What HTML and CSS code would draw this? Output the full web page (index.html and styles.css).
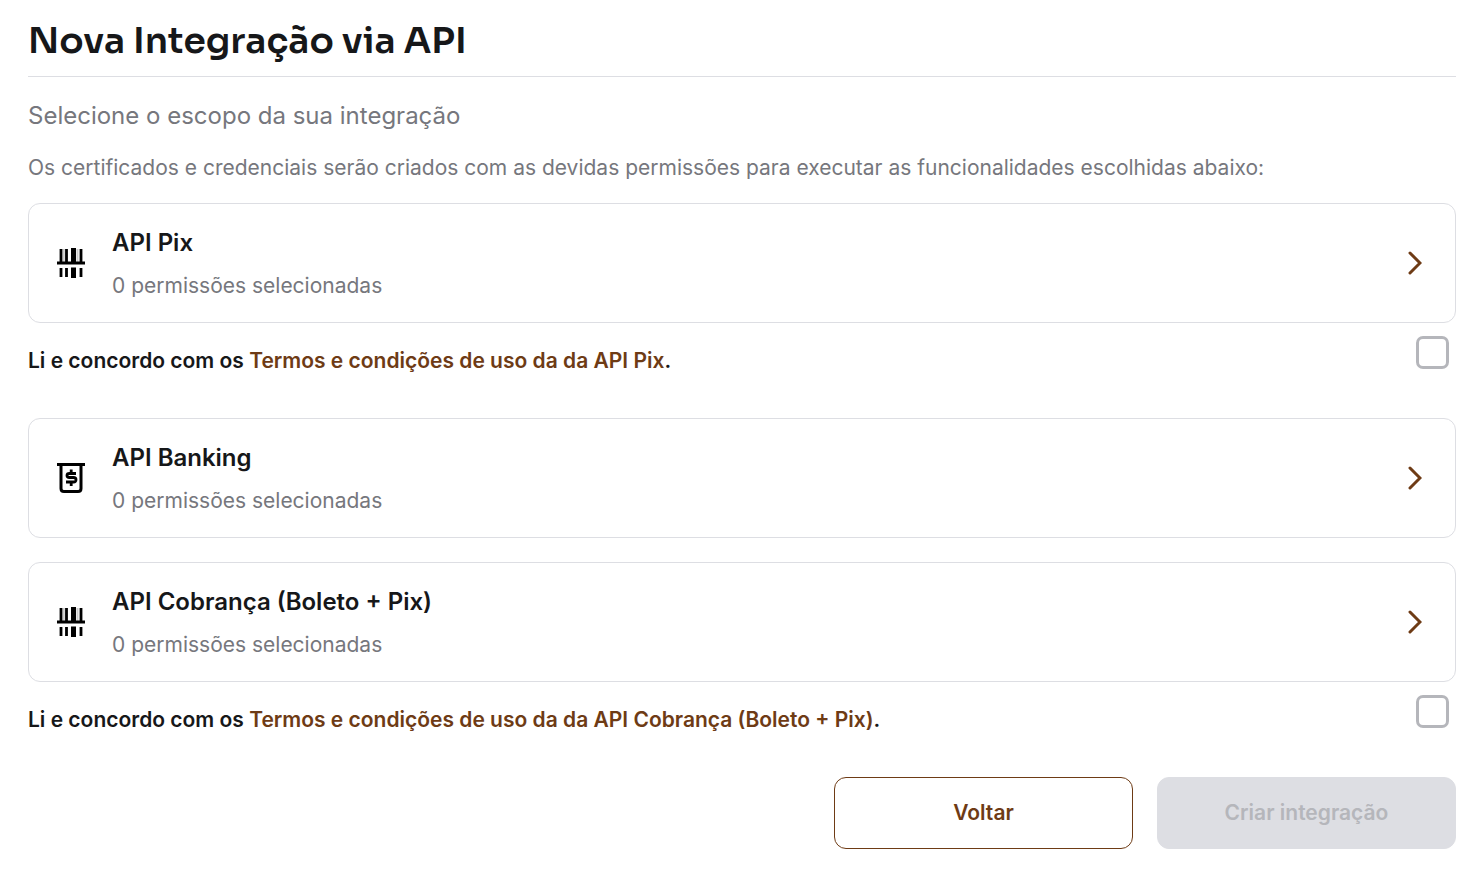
FILE: index.html
```html
<!DOCTYPE html>
<html lang="pt-BR">
<head>
  <meta charset="UTF-8" />
  <meta name="viewport" content="width=device-width, initial-scale=1.0"/>
  <title>Nova Integração via API</title>
  <link rel="stylesheet" href="styles.css">
</head>
<body>
  <svg class="sprite" aria-hidden="true">
    <symbol id="barcode" viewBox="0 0 28 30">
      <path d="M0 15h28" stroke="currentColor" stroke-width="3"/>
      <path d="M4 1v13M9.500 1v13M24 1v13M4 20v9M9.500 20v9M24 20v9" stroke="currentColor" stroke-width="2.800"/>
      <path d="M16.500 0v14M16.500 19.500v10.500" stroke="currentColor" stroke-width="5"/>
      <path d="M6.800 1v13M20.500 1v13" stroke="currentColor" stroke-opacity=".2" stroke-width="2"/>
    </symbol>
    <symbol id="banking" viewBox="0 0 28 30">
      <path d="M0 1.500h28M4 2v23.500q0 3 3 3h14q3 0 3-3V2" fill="none" stroke="currentColor" stroke-width="3"/>
      <path d="M19 10.500h-6.500q-2.500 0-2.500 2t2.500 2h4q2.500 0 2.500 2.300t-2.500 2.200H9M14.200 6.500v4M14.200 19v4" fill="none" stroke="currentColor" stroke-width="2.800"/>
    </symbol>
    <symbol id="chevron" viewBox="0 0 14 24">
      <path d="M2 2l10 10L2 22" fill="none" stroke="currentColor" stroke-width="3" stroke-linecap="round" stroke-linejoin="miter"/>
    </symbol>
  </svg>

  <main class="container">
    <h1>Nova Integração via API</h1>
    <h2>Selecione o escopo da sua integração</h2>
    <p class="descricao">Os certificados e credenciais serão criados com as devidas permissões para executar as funcionalidades escolhidas abaixo:</p>

    <form class="escopos">
      <div class="escopo">
        <button type="button" class="card">
          <svg class="icone"><use href="#barcode"/></svg>
          <span class="card-texto">
            <span class="card-titulo">API Pix</span>
            <span class="card-info">0 permissões selecionadas</span>
          </span>
          <svg class="seta"><use href="#chevron"/></svg>
        </button>
        <div class="termos">
          <label for="termosPix">Li e concordo com os <a href="#">Termos e condições de uso da da API Pix</a>.</label>
          <input type="checkbox" id="termosPix">
        </div>
      </div>

      <div class="escopo">
        <button type="button" class="card">
          <svg class="icone"><use href="#banking"/></svg>
          <span class="card-texto">
            <span class="card-titulo">API Banking</span>
            <span class="card-info">0 permissões selecionadas</span>
          </span>
          <svg class="seta"><use href="#chevron"/></svg>
        </button>
      </div>

      <div class="escopo">
        <button type="button" class="card">
          <svg class="icone"><use href="#barcode"/></svg>
          <span class="card-texto">
            <span class="card-titulo">API Cobrança (Boleto + Pix)</span>
            <span class="card-info">0 permissões selecionadas</span>
          </span>
          <svg class="seta"><use href="#chevron"/></svg>
        </button>
        <div class="termos">
          <label for="termosCobranca">Li e concordo com os <a href="#">Termos e condições de uso da da API Cobrança (Boleto + Pix)</a>.</label>
          <input type="checkbox" id="termosCobranca">
        </div>
      </div>

      <div class="acoes">
        <button type="button" class="botao voltar">Voltar</button>
        <button type="submit" class="botao criar" disabled>Criar integração</button>
      </div>
    </form>
  </main>
</body>
</html>
```

FILE: styles.css
```css
* {
  box-sizing: border-box;
}
body {
  margin: 0;
  background: #fff;
  color: #161719;
  font-family: Inter, "Liberation Sans", sans-serif;
}
.sprite {
  display: none;
}
.container {
  padding: 16px 26px 40px 28px;
}
h1 {
  margin: 0;
  padding-bottom: 10px;
  border-bottom: 1px solid #dddee3;
  font-family: Sora, Inter, sans-serif;
  font-size: 36px;
  line-height: 50px;
  font-weight: 600;
}
h2 {
  margin: 21px 0 0;
  color: #76777d;
  font-size: 24px;
  line-height: 36px;
  font-weight: 400;
}
.descricao {
  margin: 19px 0 20px;
  color: #76777d;
  font-size: 21px;
  line-height: 30px;
}
.escopos {
  display: flex;
  flex-direction: column;
  gap: 24px;
}
.card {
  display: flex;
  align-items: center;
  width: 100%;
  padding: 21px 33px 21px 28px;
  border: 1px solid #dddee3;
  border-radius: 12px;
  background: #fff;
  color: #161719;
  font-family: inherit;
  text-align: left;
  cursor: pointer;
}
.icone {
  width: 28px;
  height: 30px;
  color: #000;
}
.card-texto {
  display: flex;
  flex: 1;
  flex-direction: column;
  gap: 10px;
  margin-left: 27px;
}
.card-titulo {
  font-size: 24px;
  line-height: 36px;
  font-weight: 600;
}
.card-info {
  color: #76777d;
  font-size: 21px;
  line-height: 30px;
}
.seta {
  width: 14px;
  height: 24px;
  color: #6e3b15;
}
.termos {
  display: flex;
  align-items: flex-start;
  justify-content: space-between;
  padding: 13px 7px 18px 0;
}
.termos label {
  padding-top: 10px;
  font-size: 21px;
  line-height: 30px;
  font-weight: 600;
}
.termos a {
  color: #6e3b15;
  text-decoration: none;
}
.termos input {
  appearance: none;
  flex: none;
  width: 33px;
  height: 33px;
  margin: 0;
  border: 3px solid #b5b6bb;
  border-radius: 7px;
  background: #fff;
}
.acoes {
  display: flex;
  justify-content: flex-end;
  gap: 24px;
}
.botao {
  width: 299px;
  padding: 20px;
  border: 1px solid #6e3b15;
  border-radius: 12px;
  background: #fff;
  color: #6e3b15;
  font-family: inherit;
  font-size: 21px;
  line-height: 30px;
  font-weight: 600;
}
.criar {
  border-color: #dddee3;
  background: #dddee3;
  color: #b5b6bb;
}
```
